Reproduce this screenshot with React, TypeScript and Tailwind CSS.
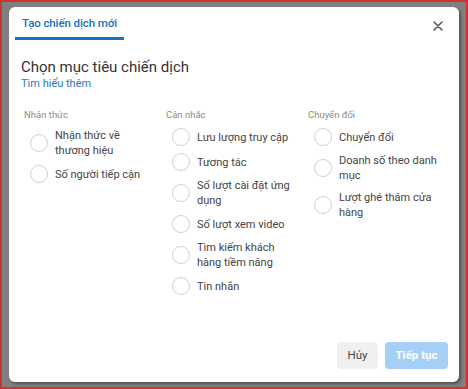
import React from "react";

const cols = [
  { title: "Nhận thức", items: ["Nhận thức về thương hiệu", "Số người tiếp cận"] },
  {
    title: "Cân nhắc",
    items: [
      "Lưu lượng truy cập",
      "Tương tác",
      "Số lượt cài đặt ứng dụng",
      "Số lượt xem video",
      "Tìm kiếm khách hàng tiềm năng",
      "Tin nhắn",
    ],
  },
  { title: "Chuyển đổi", items: ["Chuyển đổi", "Doanh số theo danh mục", "Lượt ghé thăm cửa hàng"] },
];

export default function App() {
  return (
    <div
      className="w-[468px] h-[389px] border-2 border-[#d3312e] bg-[#7f7f7f] overflow-hidden"
      style={{ fontFamily: "Roboto, 'Noto Sans', sans-serif" }}
    >
      <div className="ml-[7px] mt-[5px] w-[450px] h-[375px] bg-white rounded-[6px] shadow-[2px_2px_3px_rgba(0,0,0,0.35)] flex flex-col">
        <div className="flex items-start justify-between h-[34px]">
          <div className="ml-[6px] w-[109px] h-[33px] border-b-[3px] border-[#1a6fc1] flex items-center justify-center pt-[4px]">
            <span className="text-[11.5px] font-medium text-[#1a6fc1] tracking-[-0.1px]">Tạo chiến dịch mới</span>
          </div>
          <svg className="mr-[16px] mt-[14px]" width="10" height="10" viewBox="0 0 10 10">
            <path d="M1 1L9 9M9 1L1 9" stroke="#555" strokeWidth="1.6" strokeLinecap="round" />
          </svg>
        </div>
        <div className="pl-[12px] pt-[17px]">
          <div className="text-[15px] leading-[18px] text-[#333]">Chọn mục tiêu chiến dịch</div>
          <div className="text-[11px] leading-[14px] text-[#2b78c0] mt-[1px]">Tìm hiểu thêm</div>
        </div>
        <div className="flex pl-[15px] mt-[18px]">
          {cols.map((c) => (
            <div key={c.title} className="w-[142px]">
              <div className="text-[9.5px] leading-[12px] text-[#8a8a8a]">{c.title}</div>
              <div className="flex flex-col gap-[7px] mt-[7px] pl-[6px]">
                {c.items.map((it) => (
                  <div key={it} className="flex items-center gap-[7px]">
                    <div className="w-[18px] h-[18px] rounded-full border border-[#d0d0d0] shrink-0" />
                    <div className="w-[100px] text-[11px] leading-[15px] text-[#444]">{it}</div>
                  </div>
                ))}
              </div>
            </div>
          ))}
        </div>
        <div className="mt-auto flex justify-end gap-[7px] pr-[11px] pb-[13px]">
          <button className="w-[41px] h-[27px] rounded-[4px] bg-[#f0f0f0] text-[11.5px] text-[#444]">Hủy</button>
          <button className="w-[63px] h-[27px] rounded-[4px] bg-[#a6cff6] text-[11.5px] font-bold text-white">Tiếp tục</button>
        </div>
      </div>
    </div>
  );
}
